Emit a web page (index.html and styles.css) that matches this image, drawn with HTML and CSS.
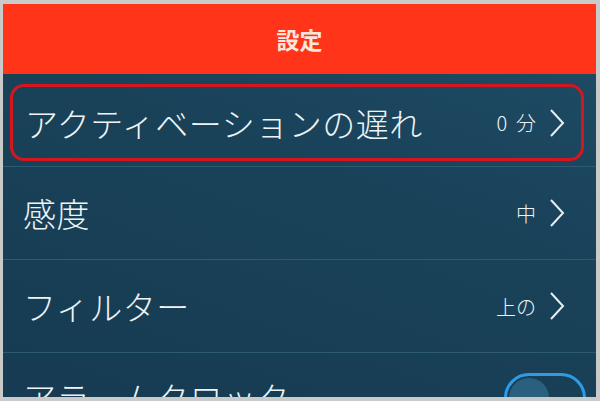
FILE: index.html
```html
<!DOCTYPE html>
<html lang="ja">
<head>
<meta charset="utf-8">
<link rel="stylesheet" href="styles.css">
</head>
<body>
<div class="frame">
  <header class="header">設定</header>
  <div class="list">
    <div class="row row-first">
      <div class="highlight">
        <span class="label">アクティベーションの遅れ</span>
        <span class="value">0&nbsp;&nbsp;分</span>
        <svg class="chev" width="16" height="30" viewBox="0 0 16 30"><polyline points="2,2 14,15 2,28" fill="none" stroke="#e9eef1" stroke-width="2"/></svg>
      </div>
    </div>
    <div class="row">
      <span class="label">感度</span>
      <span class="value">中</span>
      <svg class="chev" width="16" height="30" viewBox="0 0 16 30"><polyline points="2,2 14,15 2,28" fill="none" stroke="#e9eef1" stroke-width="2"/></svg>
    </div>
    <div class="row">
      <span class="label">フィルター</span>
      <span class="value">上の</span>
      <svg class="chev" width="16" height="30" viewBox="0 0 16 30"><polyline points="2,2 14,15 2,28" fill="none" stroke="#e9eef1" stroke-width="2"/></svg>
    </div>
    <div class="row row-last">
      <span class="label">アラームクロック</span>
      <span class="toggle"><span class="knob"></span></span>
    </div>
  </div>
</div>
</body>
</html>
```

FILE: styles.css
```css
html, body {
  margin: 0;
  padding: 0;
}
body {
  background: #c9caca;
  padding: 4px 4px 4px 3px;
  font-family: "Noto Sans CJK JP", "Noto Sans", sans-serif;
  color: #eef3f5;
}
.frame {
  height: 393px;
  overflow: hidden;
  background: linear-gradient(200deg, #1f4c66 0%, #194259 45%, #163b52 100%);
  display: flex;
  flex-direction: column;
}
.header {
  height: 70px;
  flex: none;
  background: #ff3418;
  color: #fde6dc;
  font-weight: 700;
  font-size: 23px;
  display: flex;
  align-items: center;
  justify-content: center;
}
.list {
  display: flex;
  flex-direction: column;
}
.row {
  height: 92px;
  flex: none;
  border-bottom: 1px solid #2c5a74;
  display: flex;
  align-items: center;
  padding: 0 31px 0 20px;
}
.row-first {
  padding: 10px 12px 5px 7px;
  box-sizing: border-box;
  height: 93px;
}
.highlight {
  flex: 1;
  height: 100%;
  box-sizing: border-box;
  border: 3px solid #d4161e;
  border-radius: 14px;
  display: flex;
  align-items: center;
  padding: 0 16px 0 12px;
}
.label {
  font-size: 33px;
  font-weight: 300;
  letter-spacing: 0.5px;
  flex: 1;
  white-space: nowrap;
}
.value {
  font-size: 20px;
  font-weight: 300;
  margin-right: 13px;
}
.chev {
  display: block;
  flex: none;
}
.row-last {
  align-items: flex-start;
  padding-top: 20px;
  padding-right: 10px;
  box-sizing: border-box;
  border-bottom: none;
}
.toggle {
  flex: none;
  width: 82px;
  height: 50px;
  box-sizing: border-box;
  border: 3px solid #2f9be6;
  border-radius: 25px;
  position: relative;
}
.knob {
  position: absolute;
  left: 2px;
  top: 2px;
  width: 40px;
  height: 40px;
  border-radius: 50%;
  background: #2a5f7e;
}
```
